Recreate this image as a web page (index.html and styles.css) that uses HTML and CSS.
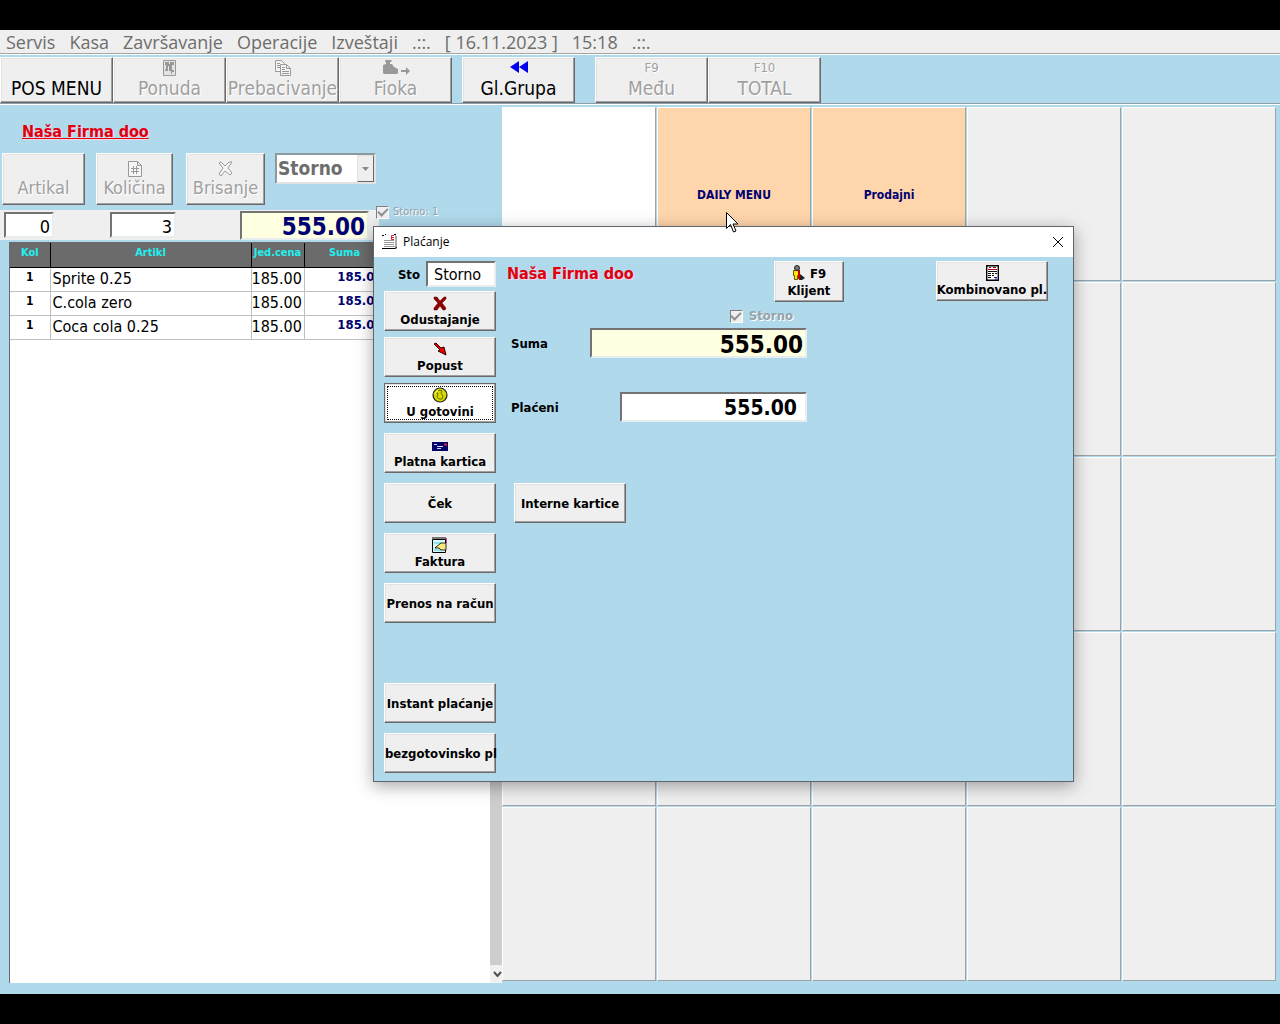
FILE: index.html
```html
<!DOCTYPE html>
<html lang="sr">
<head>
<meta charset="utf-8">
<title>POS – Plaćanje</title>
<link rel="stylesheet" href="styles.css">
</head>
<body>
<div class="app">
  <nav class="menubar">
    <a href="#">Servis</a><a href="#">Kasa</a><a href="#">Završavanje</a><a href="#">Operacije</a><a href="#">Izveštaji</a><span>.::.</span><span>[ 16.11.2023 ]</span><span>15:18</span><span>.::.</span>
  </nav>

  <div class="toolbar">
    <div class="tool-group">
      <button class="btn tool">POS MENU</button>
      <button class="btn tool" disabled>
        <svg class="icon" width="14" height="16" viewBox="0 0 14 16"><path d="M.5.5h12v15H.5z" fill="#e4e4e4" stroke="#999"/><path d="M2 2h4v2h1V2h4v3H9v5h2v2H9v2H8v-3H6V6H5v5H2V9h1V5H2z" fill="#999"/></svg>
        Ponuda</button>
      <button class="btn tool" disabled>
        <svg class="icon" width="16" height="16" viewBox="0 0 16 16" fill="#f4f4f4" stroke="#999"><path d="M.5.5h6l3 3v8h-9zM2 3.500h3M2 5.500h3M2 7.500h3"/><path d="M5.500 4.500h6l4 4v7h-10zM11.500 4.500v4h4M7 7.500h3M7 9.500h3M7 11.500h7M7 13.500h7"/></svg>
        Prebacivanje</button>
      <button class="btn tool" disabled>
        <svg class="icon" width="28" height="16" viewBox="0 0 28 16" fill="#999"><path d="M4 0h5l1 1-1 1H8v2h2l2 3 4 2v4l-1 1H2l-1-1V5l3-1V2H3V1zM19 10h5V7l4 4-4 4v-3h-5z"/></svg>
        Fioka</button>
    </div>
    <div class="tool-group">
      <button class="btn tool">
        <svg class="icon" width="18" height="16" viewBox="0 0 18 16" fill="#0000f0"><path d="M0 7l9-6v12zM9 7l9-6v12z"/></svg>
        Gl.Grupa</button>
    </div>
    <div class="tool-group wide">
      <button class="btn tool" disabled><small>F9</small>Među</button>
      <button class="btn tool" disabled><small>F10</small>TOTAL</button>
    </div>
  </div>

  <main class="workspace">
    <section class="order">
      <a class="firm" href="#">Naša Firma doo</a>
      <div class="order-actions">
        <button class="btn action artikal" disabled>Artikal</button>
        <button class="btn action kolicina" disabled>
          <svg class="icon" width="14" height="16" viewBox="0 0 14 16" fill="none" stroke="#999"><path fill="#f6f6f6" d="M.5.5h9l4 4v11H.5zM9.500.5v4h4"/><path d="M5.500 5v8M8.500 5v8M3 7.500h8M3 10.500h8"/></svg>
          Količina</button>
        <button class="btn action brisanje" disabled>
          <svg class="icon" width="16" height="16" viewBox="0 0 16 16" fill="#f6f6f6" stroke="#999"><path d="M1 2l2-1 4 4 4-4h3l-4 6 4 5-2 2-5-4-4 5-2-2 4-6z"/></svg>
          Brisanje</button>
        <div class="combo">
          <select aria-label="Sto" disabled><option>Storno</option></select>
          <span class="combo-arrow"><svg width="7" height="4" viewBox="0 0 7 4"><path d="M0 0h7L3.500 4z" fill="#888"/></svg></span>
        </div>
      </div>
      <div class="totals">
        <div class="totals-strip">
          <input class="field narrow" aria-label="Artikal" value="0">
          <input class="field count" aria-label="Količina" value="3">
          <input class="field total" aria-label="Ukupno" value="555.00">
        </div>
        <label class="check small"><input type="checkbox" checked disabled>Storno: 1</label>
      </div>
      <div class="receipt">
        <div class="receipt-list">
          <table>
            <thead><tr><th class="c-kol">Kol</th><th class="c-art">Artikl</th><th class="c-cena">Jed.cena</th><th class="c-suma">Suma</th><th></th></tr></thead>
            <tbody>
              <tr><td>1</td><td>Sprite 0.25</td><td>185.00</td><td>185.00</td><td></td></tr>
              <tr><td>1</td><td>C.cola zero</td><td>185.00</td><td>185.00</td><td></td></tr>
              <tr><td>1</td><td>Coca cola 0.25</td><td>185.00</td><td>185.00</td><td></td></tr>
            </tbody>
          </table>
        </div>
        <div class="scrollbar">
          <button class="scroll-down" aria-label="Dole"><svg width="9" height="7" viewBox="0 0 9 7"><path d="M1 1l3.500 4L8 1" fill="none" stroke="#505050" stroke-width="2"/></svg></button>
        </div>
      </div>
    </section>

    <section class="groups">
      <button class="tile blank"></button><button class="tile peach">DAILY MENU</button><button class="tile peach">Prodajni</button><button class="tile"></button><button class="tile"></button>
      <button class="tile"></button><button class="tile"></button><button class="tile"></button><button class="tile"></button><button class="tile"></button>
      <button class="tile"></button><button class="tile"></button><button class="tile"></button><button class="tile"></button><button class="tile"></button>
      <button class="tile"></button><button class="tile"></button><button class="tile"></button><button class="tile"></button><button class="tile"></button>
      <button class="tile"></button><button class="tile"></button><button class="tile"></button><button class="tile"></button><button class="tile"></button>
    </section>
  </main>

  <div class="dialog" role="dialog" aria-labelledby="dialog-title">
    <header class="titlebar">
      <svg width="16" height="16" viewBox="0 0 16 16"><path d="M3 1h10v14H3z" fill="#fff"/><path d="M0 1.500h2M12 .5h2M3 .5h1" stroke="#000"/><path d="M2 6.500h10M2 8.500h10M2 10.500h10M2 12.500h11" stroke="#999"/><path d="M13.500 1v14M14.500 2v12" stroke="#aaa"/><path d="M0 14.500h13l2-1" stroke="#000" fill="none"/><path d="M12 1.500H9.500v4H12M9.500 3.500H12" stroke="#d02030" fill="none"/></svg>
      <h1 id="dialog-title">Plaćanje</h1>
      <button class="close" aria-label="Zatvori"><svg width="12" height="12" viewBox="0 0 12 12"><path d="M1 1l10 10M11 1L1 11" stroke="#000" fill="none"/></svg></button>
    </header>
    <div class="dialog-body">
      <div class="methods">
        <div class="table-no"><label for="sto">Sto</label><input id="sto" class="field" value="Storno"></div>
        <button class="btn pay">
          <svg class="icon" width="14" height="16" viewBox="0 0 14 16"><path d="M1 2h3l3 4 4-4h2v2L9 8l4 5-1 2h-2l-3-4-3 4H1v-2l4-5-4-4z" fill="#900000" stroke="#600000" stroke-width=".5"/></svg>
          Odustajanje</button>
        <button class="btn pay">
          <svg class="icon" width="14" height="16" viewBox="0 0 14 16"><path d="M1 3l2-1 5 5 3-1 2 8-8-4 2-1z" fill="#e80000" stroke="#300"/></svg>
          Popust</button>
        <button class="btn pay focused">
          <svg class="icon" width="16" height="16" viewBox="0 0 16 16"><circle cx="8" cy="8" r="7" fill="#d8d800" stroke="#222" stroke-width="1.200"/><path d="M5 3.500h5M4 6h2l-1 4 2 2h3l1-3-2-3 1-2" stroke="#707000" fill="none"/><path d="M3 7l3-4" stroke="#ffff80"/></svg>
          U gotovini</button>
        <button class="btn pay apart">
          <svg class="icon" width="16" height="16" viewBox="0 0 16 16"><path d="M0 5h16v9H0z" fill="#000068"/><path d="M2 7.500h3M5 9.500h6M5 11.500h4" stroke="#d8d8ff"/><circle cx="13.500" cy="7.500" r="1.500" fill="#d02020"/></svg>
          Platna kartica</button>
        <button class="btn pay apart">Ček</button>
        <button class="btn pay apart">
          <svg class="icon" width="16" height="16" viewBox="0 0 16 16"><path d="M.5 2.500h13v13H.5z" fill="#d8fcfc" stroke="#000"/><path d="M1 2V0M3 3V0M5 3V0M7 3V0M9 3V0M11 3V0M13 3V0" stroke="#000"/><path d="M2 6h7M2 13h8" stroke="#40c8d0"/><path d="M4 10l5-4h5v7H9L7 11H3z" fill="#f8e880" stroke="#000" stroke-width=".8"/><path d="M14.500 1v5" stroke="#c040a0"/></svg>
          Faktura</button>
        <button class="btn pay apart">Prenos na račun</button>
        <button class="btn pay lower">Instant plaćanje</button>
        <button class="btn pay apart from-left">bezgotovinsko pl</button>
      </div>

      <div class="payment">
        <div class="payment-head">
          <h2>Naša Firma doo</h2>
          <button class="btn client">
            <span class="client-key"><svg width="13" height="16" viewBox="0 0 13 16"><path d="M8 9l5 4-3 2H7z" fill="#202020"/><path d="M1.500 5.500h5v5h-1v4h-3v-4h-1z" fill="#ffe800" stroke="#705000"/><path d="M6 5h2v9H6z" fill="#c80000"/><circle cx="5" cy="3" r="2.500" fill="#777" stroke="#222"/></svg>F9</span>
            Klijent</button>
          <button class="btn pay combined">
            <svg class="icon" width="13" height="16" viewBox="0 0 13 16"><path d="M.7.7h11.600v14.600H.7z" fill="#fff" stroke="#000" stroke-width="1.400"/><path d="M3 2.500h2M7 2.500h3M2 4.500h9" stroke="#a00010"/><path d="M2 6.500h9M2 8.500h3M6 8.500h2M9 8.500h2M2 10.500h3M6 10.500h2M2 12.500h3" stroke="#111"/><path d="M8 12.500h3M9 14h2" stroke="#2020c0"/></svg>
            Kombinovano pl.</button>
        </div>
        <div class="amounts">
          <label class="check"><input type="checkbox" checked disabled>Storno</label>
          <div class="amount"><label for="suma">Suma</label><input id="suma" class="field sum" value="555.00"></div>
          <div class="amount paid"><label for="placeni">Plaćeni</label><input id="placeni" class="field" value="555.00"></div>
        </div>
        <button class="btn pay internal">Interne kartice</button>
      </div>
    </div>
  </div>

  <svg class="pointer" width="13" height="21" viewBox="0 0 13 21"><path d="M.5.5v16l4-4 3 7.500 2.500-1-3-7h5z" fill="#fff" stroke="#000"/></svg>
</div>
</body>
</html>
```
FILE: styles.css
```css
* { box-sizing: border-box; }

body {
  margin: 0;
  padding: 30px 0;
  min-height: 100vh;
  display: flex;
  background: #000;
  color: #000;
  font-family: "DejaVu Sans Condensed", "DejaVu Sans", sans-serif;
}

button, input, select { font: inherit; color: inherit; margin: 0; border-radius: 0; }
a { color: inherit; text-decoration: none; }
svg { display: block; flex: none; }

.app {
  position: relative;
  flex: 1;
  display: flex;
  flex-direction: column;
  background: #b1d9ec;
}

/* Menu */
.menubar {
  display: flex;
  gap: 14px;
  height: 25px;
  padding: 0 6px;
  background: #efefef;
  border-bottom: 1px solid #fff;
  box-shadow: inset 0 -1px #a0a8a4;
  color: #6d6d6d;
  font: 18px/25px "Open Sans", sans-serif;
}

/* Buttons */
.btn {
  display: flex;
  flex-direction: column;
  align-items: center;
  justify-content: flex-end;
  padding: 0;
  background: #efefef;
  border: 1px solid;
  border-color: #fff #696969 #696969 #fff;
  box-shadow: inset -1px -1px #a0a0a0, inset 1px 1px #e3e3e3;
  white-space: nowrap;
}
.btn:disabled { color: #a0a0a0; text-shadow: 1px 1px #fff; }

.toolbar {
  display: flex;
  gap: 10px;
  height: 50px;
  padding-top: 2px;
  border-bottom: 1px solid #fff;
  box-shadow: inset 0 -1px #8e9ea6;
}
.tool-group { display: flex; }
.tool-group.wide { margin-left: 10px; }
.tool { width: 113px; height: 46px; padding-bottom: 1px; font-size: 19px; line-height: 25px; }
.tool small { font-size: 13px; line-height: 17px; }

/* Order pane */
.workspace { flex: 1; display: flex; padding: 2px 4px 10px 0; }
.order { width: 502px; display: flex; flex-direction: column; }
.firm {
  align-self: flex-start;
  margin: 14px 0 10px 22px;
  color: #e00010;
  font-size: 16px;
  line-height: 22px;
  font-weight: bold;
  text-decoration: underline;
  text-shadow: 1px 1px #f4d4e4;
}
.order-actions { display: flex; align-items: flex-start; padding-left: 2px; margin-bottom: 5px; }
.action { height: 52px; font-size: 18px; line-height: 22px; padding-bottom: 5px; }
.artikal { width: 83px; margin-right: 11px; }
.kolicina { width: 77px; margin-right: 13px; }
.brisanje { width: 79px; margin-right: 10px; }

.combo { position: relative; width: 101px; height: 31px; }
.combo select {
  appearance: none;
  width: 100%;
  height: 100%;
  padding: 0 0 2px 1px;
  background: #fff;
  border: 2px solid;
  border-color: #8c9aa0 #e3e3e3 #e3e3e3 #8c9aa0;
  color: #6d6d6d;
  opacity: 1;
  font-size: 19px;
  font-weight: bold;
}
.combo-arrow {
  position: absolute;
  top: 2px;
  right: 2px;
  bottom: 2px;
  width: 17px;
  display: flex;
  align-items: center;
  justify-content: center;
  background: #efefef;
  border: 1px solid;
  border-color: #e3e3e3 #696969 #696969 #e3e3e3;
}

.field {
  padding: 0 4px;
  background: #fff;
  border: 2px solid;
  border-color: #737373 #e8eef0 #e8eef0 #737373;
  text-align: right;
  min-width: 0;
}

.totals { display: flex; align-items: flex-start; }
.totals-strip {
  display: flex;
  align-items: center;
  width: 379px;
  height: 30px;
  padding-left: 4px;
  background: #efefef;
}
.totals-strip .field { height: 26px; font-size: 18px; padding: 3px 2px 0; }
.narrow { width: 50px; }
.count { width: 66px; margin-left: 56px; }
.totals-strip .total {
  width: 129px;
  height: 29px;
  margin-left: 64px;
  background: #ffffe1;
  color: #000070;
  font-size: 24px;
  font-weight: bold;
}

.check {
  display: flex;
  align-items: center;
  gap: 6px;
  color: #98a4ac;
  font-size: 13px;
  line-height: 14px;
  text-shadow: 1px 1px #fff;
}
.check input {
  appearance: none;
  width: 13px;
  height: 13px;
  background: #efefef;
  border: 1px solid;
  border-color: #808080 #fff #fff #808080;
  display: grid;
  place-items: center;
}
.check input::before {
  content: "";
  width: 8px;
  height: 4px;
  margin-bottom: 3px;
  border: solid #909090;
  border-width: 0 0 2px 2px;
  rotate: -45deg;
}
.check.small { gap: 4px; margin: -5px 0 0 -3px; font-size: 11px; }

.receipt {
  flex: 1;
  display: flex;
  margin: 2px 0 1px 9px;
  background: #fff;
  border: solid #696969;
  border-width: 1px 0 0 1px;
}
.receipt-list { flex: 1; min-width: 0; }
.receipt table { width: 100%; border-collapse: collapse; table-layout: fixed; }
.c-kol { width: 40px; }
.c-art { width: 201px; }
.c-cena { width: 53px; }
.c-suma { width: 81px; }
.receipt th {
  height: 24px;
  padding: 0 0 4px;
  background: #6b6b6b;
  border-right: 1px solid #000;
  border-bottom: 1px solid #000;
  color: #20f0f0;
  font-size: 11px;
  line-height: 14px;
}
.receipt td {
  height: 24px;
  padding: 0 2px;
  border-right: 1px solid #c0c0c0;
  border-bottom: 1px solid #c0c0c0;
  font-size: 16px;
  line-height: 18px;
  white-space: nowrap;
}
.receipt td:first-child { padding-bottom: 4px; font-size: 12px; font-weight: bold; text-align: center; }
.receipt td:nth-child(3) { padding: 0 3px 0 0; text-align: right; }
.receipt td:nth-child(4) { padding-bottom: 4px; color: #000070; font-size: 13px; font-weight: bold; text-align: right; }
.scrollbar { width: 12px; display: flex; flex-direction: column; justify-content: flex-end; background: #cdcdcd; }
.scroll-down { height: 18px; padding: 0 0 0 3px; border: 0; background: #f0f0f0; }

/* Article groups */
.groups {
  flex: 1;
  display: grid;
  grid-template-columns: repeat(5, 1fr);
  grid-template-rows: repeat(5, 1fr);
  gap: 1px;
  margin-bottom: 3px;
}
.tile {
  padding: 2px 0 0;
  background: #efefef;
  border: 1px solid;
  border-color: #fff #9ca4a8 #9ca4a8 #fff;
  color: #000070;
  font-size: 12px;
  font-weight: bold;
}
.blank { background: #fff; }
.peach { background: #ffd5ab; }

/* Payment window */
.dialog {
  position: absolute;
  left: 373px;
  top: 196px;
  width: 701px;
  background: #b1d9ec;
  border: 1px solid #5c666c;
  box-shadow: 0 4px 16px rgba(0, 0, 0, .35);
}
.titlebar { display: flex; align-items: center; gap: 5px; height: 30px; padding: 0 9px 0 8px; background: #fff; }
.titlebar h1 { flex: 1; margin: 0; font: 12px/16px "Open Sans", sans-serif; }
.close { padding: 0; border: 0; background: none; }

.dialog-body { display: flex; gap: 11px; padding: 4px 25px 8px 10px; font-size: 13px; font-weight: bold; }
.methods { width: 112px; }
.table-no { display: flex; align-items: center; justify-content: flex-end; gap: 6px; height: 26px; margin-bottom: 4px; }
.table-no .field { width: 70px; height: 26px; padding: 1px 6px 0; font-size: 16px; font-weight: normal; text-align: left; }
.pay { width: 112px; height: 40px; margin-bottom: 6px; font-size: 13px; line-height: 17px; font-weight: bold; justify-content: center; }
.pay.apart { margin-top: 10px; margin-bottom: 0; }
.pay.lower { margin-top: 60px; margin-bottom: 0; }
.focused {
  background: #fff;
  border-color: #696969;
  outline: 1px dotted #000;
  outline-offset: -4px;
  margin-bottom: 0;
}
.from-left { align-items: flex-start; }

.payment { flex: 1; }
.payment-head { display: flex; align-items: flex-start; height: 41px; }
.payment-head h2 {
  width: 267px;
  margin: 2px 0 0;
  color: #e00010;
  font-size: 16px;
  line-height: 22px;
  text-shadow: 1px 1px #f4d4e4;
}
.client { width: 70px; height: 41px; line-height: 17px; font-weight: bold; justify-content: center; }
.client-key { display: flex; gap: 5px; }
.combined { margin-left: auto; }

.amounts { display: flex; flex-direction: column; width: 300px; padding: 7px 0 0 4px; }
.amounts .check { align-self: flex-end; margin: 0 14px 5px 0; }
.amount { display: flex; align-items: center; justify-content: space-between; }
.amount .field { width: 187px; height: 30px; padding: 2px 8px 0; font-size: 21px; font-weight: bold; }
.amount .sum { width: 217px; padding: 3px 2px 0; background: #ffffe1; font-size: 24px; }
.paid { margin-top: 34px; }
.internal { margin: 61px 0 0 7px; }

.pointer { position: absolute; left: 726px; top: 182px; }
```
